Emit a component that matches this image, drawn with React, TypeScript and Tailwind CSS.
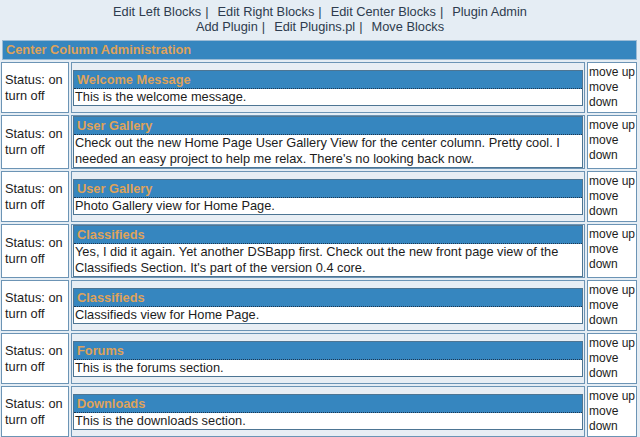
import React from 'react';

interface Block {
  title: string;
  lines: string[];
}

const blocks: Block[] = [
  { title: 'Welcome Message', lines: ['This is the welcome message.'] },
  {
    title: 'User Gallery',
    lines: [
      'Check out the new Home Page User Gallery View for the center column. Pretty cool. I',
      "needed an easy project to help me relax. There's no looking back now.",
    ],
  },
  { title: 'User Gallery', lines: ['Photo Gallery view for Home Page.'] },
  {
    title: 'Classifieds',
    lines: [
      'Yes, I did it again. Yet another DSBapp first. Check out the new front page view of the',
      "Classifieds Section. It's part of the version 0.4 core.",
    ],
  },
  { title: 'Classifieds', lines: ['Classifieds view for Home Page.'] },
  { title: 'Forums', lines: ['This is the forums section.'] },
  { title: 'Downloads', lines: ['This is the downloads section.'] },
];

function NavLink({ label, last }: { label: string; last?: boolean }) {
  return (
    <span className="whitespace-nowrap">
      <span>{label}</span>
      {!last && <span className="ml-[4px] mr-[9px]">|</span>}
    </span>
  );
}

function BlockRow({ block }: { block: Block }) {
  return (
    <div className="grid grid-cols-[68px_1fr_50px] gap-[2px]">
      <div className="flex flex-col justify-center border border-[#6c94b5] bg-white pl-[3px] leading-[16px]">
        <span>Status: on</span>
        <span>turn off</span>
      </div>
      <div className="flex flex-col justify-center border border-[#6c94b5] bg-[#e8eef4] pl-[1px] pr-[1px]">
        <div className="border border-[#4d7593]">
          <div className="h-[18px] border-b border-dotted border-b-[#1d3650] bg-[#3686bf] pl-[3px] text-[12.8px] font-bold leading-[17px] text-[#dfa25a]">
            {block.title}
          </div>
          <div className="bg-white pl-[1px] leading-[16px]">
            {block.lines.map((line, i) => (
              <div key={i} className="whitespace-nowrap">
                {line}
              </div>
            ))}
          </div>
        </div>
      </div>
      <div className="border border-[#6c94b5] bg-white py-[2px] pl-[1px] text-[12px] leading-[15px]">
        <div className="whitespace-nowrap">move up</div>
        <div>move</div>
        <div>down</div>
      </div>
    </div>
  );
}

export default function App() {
  return (
    <div className="min-h-screen overflow-hidden bg-[#e5edf4] font-['Liberation_Sans',Arial,sans-serif] text-[12.8px] text-[#1c1c1c]">
      <div className="pt-[4px] text-center leading-[15px] text-[#2e3c4e]">
        <div>
          <NavLink label="Edit Left Blocks" />
          <NavLink label="Edit Right Blocks" />
          <NavLink label="Edit Center Blocks" />
          <NavLink label="Plugin Admin" last />
        </div>
        <div>
          <NavLink label="Add Plugin" />
          <NavLink label="Edit Plugins.pl" />
          <NavLink label="Move Blocks" last />
        </div>
      </div>

      <div className="mx-[2px] mr-[3px] mt-[6px] h-[20px] border border-[#9dbcd6] bg-[#3686bf] pl-[3px] font-bold leading-[18px] text-[#dfa25a]">
        Center Column Administration
      </div>

      <div className="mt-[2px] flex flex-col gap-[2px] pl-[1px] pr-[3px]">
        {blocks.map((block, i) => (
          <BlockRow key={i} block={block} />
        ))}
      </div>
    </div>
  );
}
